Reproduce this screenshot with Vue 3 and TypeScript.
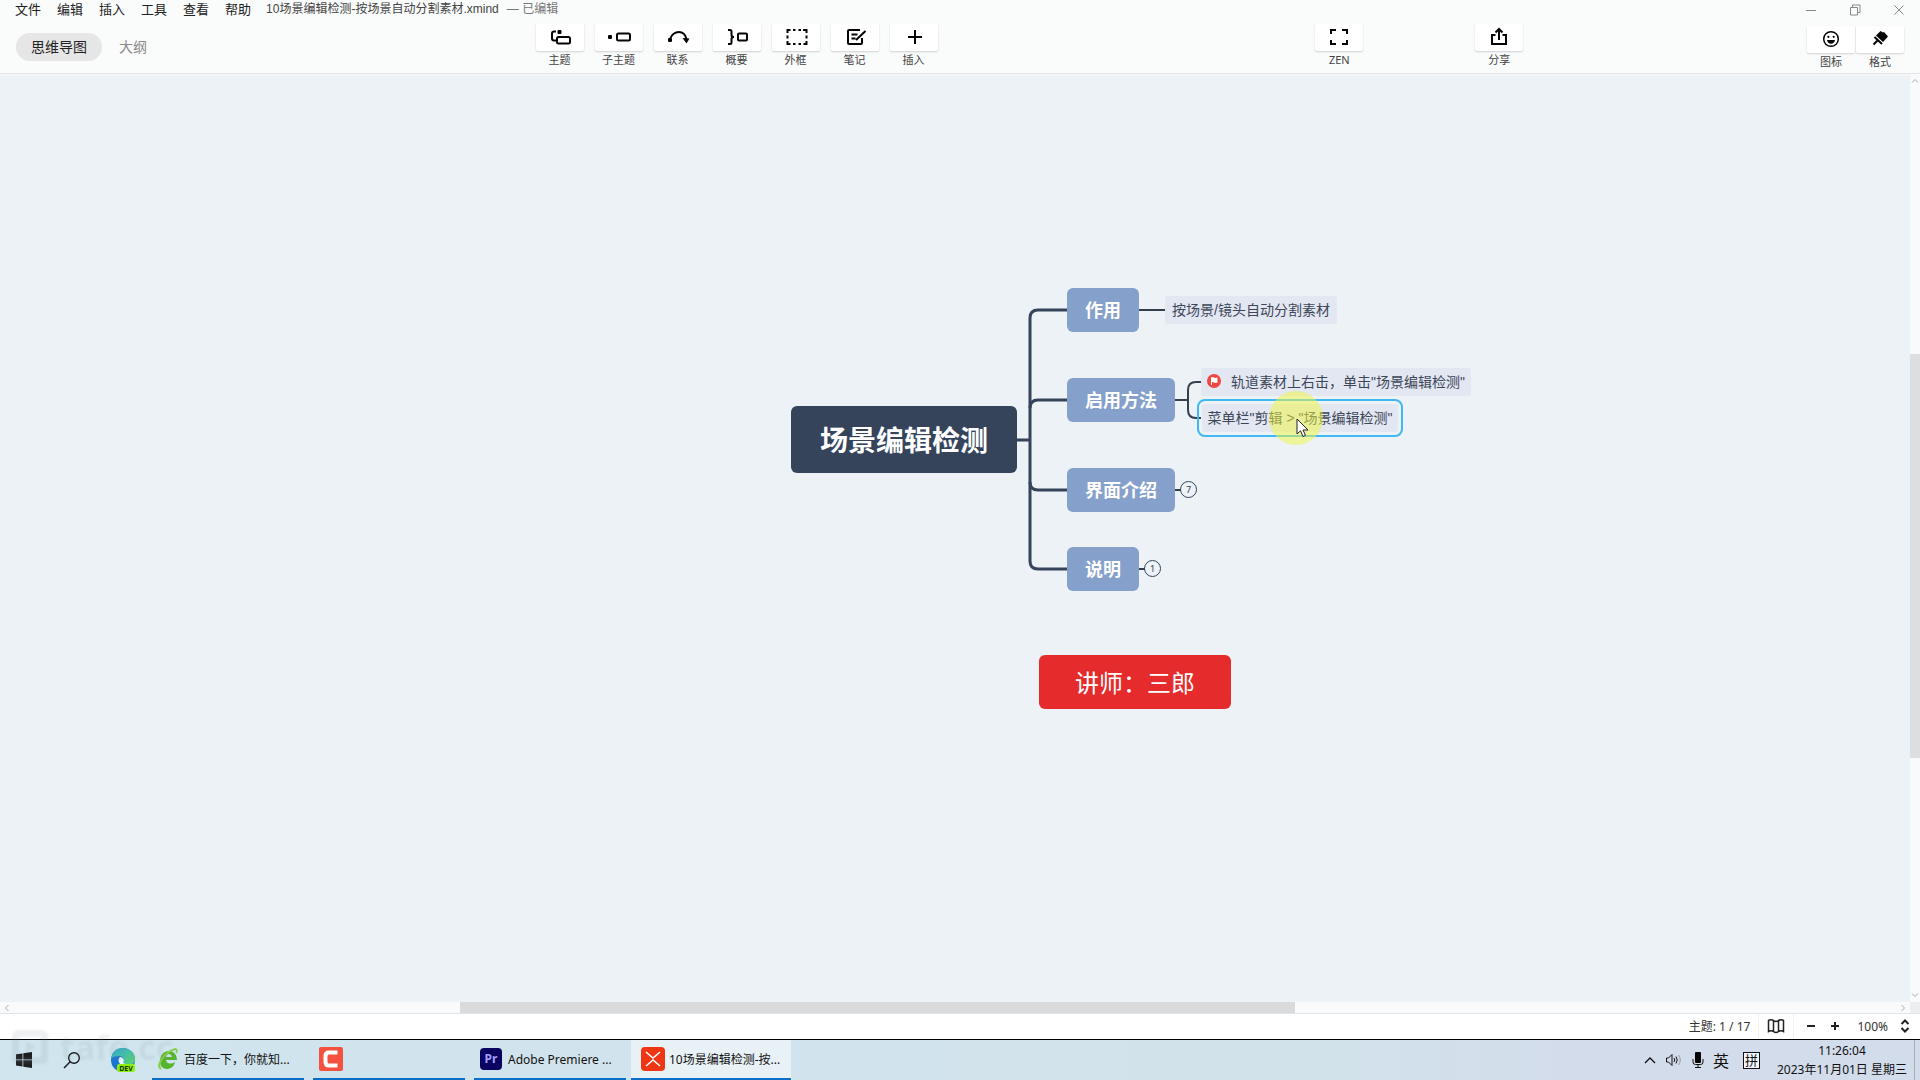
<script setup lang="ts">
import { ref } from 'vue'

interface Tool { id: string; label: string }
interface Topic { text: string; x: number; y: number; w: number; h: number; kind: string }

const menus: string[] = ['文件', '编辑', '插入', '工具', '查看', '帮助']
const activeTab = ref('map')

const tools: Tool[] = [
  { id: 'topic', label: '主题' },
  { id: 'subtopic', label: '子主题' },
  { id: 'relation', label: '联系' },
  { id: 'summary', label: '概要' },
  { id: 'boundary', label: '外框' },
  { id: 'note', label: '笔记' },
  { id: 'insert', label: '插入' },
]

const topics: Topic[] = [
  { text: '场景编辑检测', x: 0, y: 118, w: 226, h: 67, kind: 'root' },
  { text: '作用', x: 276, y: 0, w: 72, h: 44, kind: 'branch' },
  { text: '启用方法', x: 276, y: 90, w: 108, h: 44, kind: 'branch' },
  { text: '界面介绍', x: 276, y: 180, w: 108, h: 44, kind: 'branch' },
  { text: '说明', x: 276, y: 259, w: 72, h: 44, kind: 'branch' },
  { text: '讲师：三郎', x: 248, y: 367, w: 192, h: 54, kind: 'floating' },
  { text: '按场景/镜头自动分割素材', x: 374, y: 8, w: 172, h: 28, kind: 'leaf' },
  { text: '轨道素材上右击，单击"场景编辑检测"', x: 410, y: 80, w: 270, h: 28, kind: 'leaf flagged' },
  { text: '菜单栏"剪辑 > "场景编辑检测"', x: 411, y: 116, w: 196, h: 28, kind: 'leaf selected' },
]

const place = (t: Topic) => ({
  left: `${t.x}px`,
  top: `${t.y}px`,
  width: `${t.w}px`,
  height: `${t.h}px`,
})
</script>

<template>
  <div class="app">
    <header class="header">
      <div class="titlebar">
        <nav class="menus">
          <button v-for="m in menus" :key="m" type="button">{{ m }}</button>
        </nav>
        <span class="file">10场景编辑检测-按场景自动分割素材.xmind</span>
        <span class="edited">— 已编辑</span>
        <div class="window-buttons">
          <button type="button" aria-label="最小化">
            <svg width="12" height="12" viewBox="0 0 12 12"><path d="M1 6.5h10" /></svg>
          </button>
          <button type="button" aria-label="还原">
            <svg width="12" height="12" viewBox="0 0 12 12"><path d="M1.5 3.500h7v7.500h-7zM3.500 3.500v-2.500h7.500v7.500h-2.500" /></svg>
          </button>
          <button type="button" aria-label="关闭">
            <svg width="12" height="12" viewBox="0 0 12 12"><path d="M1.500 1.500l9 9M10.500 1.500l-9 9" /></svg>
          </button>
        </div>
      </div>

      <div class="toolbar">
        <div class="tabs">
          <button type="button" :class="{ active: activeTab === 'map' }" @click="activeTab = 'map'">思维导图</button>
          <button type="button" :class="{ active: activeTab === 'outline' }" @click="activeTab = 'outline'">大纲</button>
        </div>

        <div class="tools">
          <button v-for="t in tools" :key="t.id" type="button" class="tool">
            <span class="tool-box">
              <svg class="icon" width="24" height="20" viewBox="0 0 24 20">
                <template v-if="t.id === 'topic'">
                  <path d="M8 4.500H6Q4 4.500 4 6.500v5q0 2 2 2h2" />
                  <rect x="9" y="10" width="13" height="6.500" rx="1.500" />
                  <rect class="solid" x="9.500" y="3" width="4" height="4" rx="1" />
                </template>
                <template v-else-if="t.id === 'subtopic'">
                  <rect x="10" y="6.500" width="13" height="7" rx="1.500" />
                  <rect class="solid" x="1" y="8" width="4" height="4" rx="1" />
                </template>
                <template v-else-if="t.id === 'relation'">
                  <path d="M4 12C6 7 9.500 5 13 5c4 0 6.500 3 7.500 7" />
                  <rect class="solid" x="2" y="11" width="4" height="4" rx="1" />
                  <path class="solid" d="M16.500 11l7 .5-3 5z" />
                </template>
                <template v-else-if="t.id === 'summary'">
                  <path d="M3 3h2q1.500 0 1.500 1.500V8q0 2 2.500 2-2.500 0-2.500 2v3.500Q6.500 17 5 17H3" />
                  <rect x="13" y="6.500" width="9" height="7" rx="1" />
                </template>
                <template v-else-if="t.id === 'boundary'">
                  <path d="M3.500 6V3h3M9 3h2.500M14.500 3H17M19 3h3.500v3M22.500 8.500v3M22.500 14v3h-3M17 17h-2.500M11.500 17H9M6.500 17h-3v-3M3.500 11.500v-3" />
                </template>
                <template v-else-if="t.id === 'note'">
                  <path d="M17 3H6Q5 3 5 4v12q0 1 1 1h12q1 0 1-1v-5M8.500 7.500h6M8.500 11.500h4M13 13l9.500-9" />
                </template>
                <path v-else d="M6 10h14M13 3v14" />
              </svg>
            </span>
            <span>{{ t.label }}</span>
          </button>
        </div>

        <button type="button" class="tool zen">
          <span class="tool-box">
            <svg class="icon" width="24" height="20" viewBox="0 0 24 20"><path d="M4 7V3h5M15 3h5v4M20 13v4h-5M9 17H4v-4" /></svg>
          </span>
          <span>ZEN</span>
        </button>

        <button type="button" class="tool share">
          <span class="tool-box">
            <svg class="icon" width="24" height="20" viewBox="0 0 24 20"><path d="M8.500 8H5v9h14V8h-3.500M12 13V2.500M8.500 5.500L12 2l3.500 3.500" /></svg>
          </span>
          <span>分享</span>
        </button>

        <div class="side-tools">
          <button type="button" class="tool">
            <span class="tool-box">
              <svg class="icon" width="24" height="20" viewBox="0 0 24 20">
                <circle class="thin" cx="12" cy="10" r="7.300" />
                <path class="solid" d="M8 11h8q-.7 3.800-4 3.800T8 11z" />
                <circle class="solid" cx="9.300" cy="7.800" r="1.100" />
                <circle class="solid" cx="14.700" cy="7.800" r="1.100" />
              </svg>
            </span>
            <span>图标</span>
          </button>
          <button type="button" class="tool">
            <span class="tool-box">
              <svg class="icon" width="24" height="20" viewBox="0 0 24 20">
                <path class="solid" d="M12.500 2l2.500 1.500L16 3l4 4.500-5 5.500-7-6.500z" />
                <path d="M6.500 8l7.500 7M9.500 11.500L5.500 15.500" />
              </svg>
            </span>
            <span>格式</span>
          </button>
        </div>
      </div>
    </header>

    <main class="workspace">
      <section class="canvas">
        <div class="map">
          <svg class="links" width="420" height="310" viewBox="0 0 420 310">
            <g class="trunk">
              <path d="M226 152h13" />
              <path d="M276 22h-29q-8 0-8 8v243q0 8 8 8h29" />
              <path d="M276 112h-29q-8 0-8 8M276 202h-29q-8 0-8-8" />
            </g>
            <g class="twig">
              <path d="M348 22h26M384 112h13M410 94h-5q-8 0-8 8v20q0 8 8 8h5M384 202h6M348 281h6" />
            </g>
          </svg>
          <div v-for="t in topics" :key="t.text" class="topic" :class="t.kind" :style="place(t)">
            <svg v-if="t.kind.includes('flagged')" width="14" height="14" viewBox="0 0 14 14">
              <circle cx="7" cy="7" r="7" fill="#ee4744" />
              <path d="M4 11V3.500q1.500-.8 3 0t3.500 0V8.500q-2 .8-3.500 0t-2 0V11z" fill="#fff" />
            </svg>
            <span>{{ t.text }}</span>
          </div>
          <button type="button" class="fold fold-seven">7</button>
          <button type="button" class="fold fold-one">1</button>
          <div class="halo"></div>
          <svg class="cursor" width="14" height="20" viewBox="0 0 14 20">
            <path d="M1 1v15l3.500-3.200 2.500 5.700 2.500-1.200L7 12h5z" fill="#fff" stroke="#222" />
          </svg>
        </div>
      </section>
      <div class="vscroll">
        <svg width="8" height="8" viewBox="0 0 8 8"><path d="M1 5.500l3-3 3 3" /></svg>
        <div class="vtrack"><div class="vthumb"></div></div>
        <svg width="8" height="8" viewBox="0 0 8 8"><path d="M1 2.500l3 3 3-3" /></svg>
      </div>
      <div class="hscroll">
        <svg width="8" height="8" viewBox="0 0 8 8"><path d="M5.500 1l-3 3 3 3" /></svg>
        <div class="htrack"><div class="hthumb"></div></div>
        <svg width="8" height="8" viewBox="0 0 8 8"><path d="M2.500 1l3 3-3 3" /></svg>
      </div>
      <div class="corner"></div>
    </main>

    <footer class="status">
      <span class="count">主题: 1 / 17</span>
      <button type="button" class="overview" aria-label="导航图">
        <svg width="18" height="16" viewBox="0 0 18 16"><path d="M1.500 2.500q2.500-1.500 5 0v11q-2.500-1.500-5 0zM6.500 2.500q2.500 2 5 0v11q-2.500 2-5 0M11.500 2.500q2.500-1.500 5 0v11q-2.500-1.500-5 0" /></svg>
      </button>
      <button type="button" class="step" aria-label="缩小"><svg width="10" height="10" viewBox="0 0 10 10"><path d="M1 5h8" /></svg></button>
      <button type="button" class="step" aria-label="放大"><svg width="10" height="10" viewBox="0 0 10 10"><path d="M1 5h8M5 1v8" /></svg></button>
      <span class="zoom">100%</span>
      <button type="button" class="spin" aria-label="缩放比例"><svg width="10" height="14" viewBox="0 0 10 14"><path d="M1.500 5L5 1.500 8.500 5M1.500 9L5 12.500 8.500 9" /></svg></button>
    </footer>

    <div class="taskbar">
      <button type="button" class="launch" aria-label="开始">
        <svg width="16" height="16" viewBox="0 0 16 16"><path d="M0 2.300l6.500-.9v6.100H0zM7.300 1.300L16 0v7.500H7.300zM0 8.300h6.500v6.200L0 13.600zM7.300 8.300H16V16l-8.700-1.300z" fill="#1b1d20" /></svg>
      </button>
      <button type="button" class="launch" aria-label="搜索">
        <svg width="18" height="18" viewBox="0 0 18 18"><circle cx="11" cy="7" r="5.300" fill="none" stroke="#17191c" stroke-width="1.400" /><path d="M7.200 10.800L1 17" stroke="#17191c" stroke-width="1.400" /></svg>
      </button>
      <button type="button" class="launch edge" aria-label="Edge">
        <svg width="26" height="26" viewBox="0 0 26 26">
          <defs>
            <linearGradient id="edge-top" x1="0" y1="0" x2="1" y2="1"><stop offset="0" stop-color="#2aa9df" /><stop offset="1" stop-color="#5fd764" /></linearGradient>
          </defs>
          <circle cx="13" cy="13" r="12" fill="#1976d0" />
          <path d="M1 12C2 4 7 1 13 1c7 0 12 5 12 11 0 4-3 6-7 6-3 0-5-1-4-3 1-4-2-6-5-6-4 0-7 1-8 3z" fill="url(#edge-top)" />
          <path d="M10 10c-3 3-1 8 4 9l1-2c-2-1-2-2-1-3 0-3-2-4-4-4z" fill="#e5f5fb" />
          <rect x="7" y="17" width="18" height="8" rx="2" fill="#8df010" />
          <text x="16" y="24" text-anchor="middle" font-size="7" font-weight="700" fill="#163000">DEV</text>
        </svg>
      </button>

      <button type="button" class="task">
        <svg width="20" height="24" viewBox="0 0 20 24">
          <path d="M2 15C2 7 7 4 11 4c5 0 8 4 8 9H8c0 3 4 5 9 2-1 5-5 7-8 7-4 0-7-3-7-7zM8 10h6c-1-4-5-4-6 0z" fill="#55b52d" />
          <path d="M3 22C-3 19 7 4 18 2" fill="none" stroke="#84cf42" stroke-width="2" />
          <path d="M18 2q2 1 0 4" fill="none" stroke="#84cf42" stroke-width="1.500" />
        </svg>
        <span>百度一下，你就知...</span>
      </button>
      <button type="button" class="task" aria-label="Camtasia">
        <svg width="24" height="24" viewBox="0 0 24 24"><rect width="24" height="24" rx="2" fill="#f4513f" /><path d="M18.500 5.500H10Q6.500 5.500 6.500 9v6q0 3.500 3.500 3.500h8.500" fill="none" stroke="#fff" stroke-width="4" /></svg>
      </button>
      <button type="button" class="task">
        <svg width="22" height="22" viewBox="0 0 22 22"><rect width="22" height="22" rx="4" fill="#0a0460" /><text x="11" y="15" text-anchor="middle" font-size="12" font-weight="700" fill="#a59cff">Pr</text></svg>
        <span>Adobe Premiere ...</span>
      </button>
      <button type="button" class="task current">
        <svg width="24" height="24" viewBox="0 0 24 24"><rect width="24" height="24" rx="4" fill="#ee3514" /><path d="M5 5l7 6 7-6M5 19l7-6 7 6" fill="none" stroke="#fff" stroke-width="1.600" /></svg>
        <span>10场景编辑检测-按...</span>
      </button>

      <div class="tray">
        <svg width="12" height="8" viewBox="0 0 12 8"><path d="M1 7l5-5 5 5" fill="none" stroke="#111" stroke-width="1.300" /></svg>
        <svg class="speaker" width="18" height="14" viewBox="0 0 18 14" fill="none" stroke="#111"><path d="M1.500 5h2L7 1.500v11L3.500 9h-2z" /><path d="M9 5q1.500 2 0 4M11 3.500q2.500 3.500 0 7" /><path d="M13.500 2q3.500 5 0 10" stroke="#999" /></svg>
        <svg class="mic" width="12" height="16" viewBox="0 0 12 16"><rect x="3" y="0" width="6" height="11" rx="1" fill="#050505" /><path d="M1 7v3q0 2.500 2.500 2.500h5Q11 12.500 11 10V7M6 12v3M3 15.500h6" fill="none" stroke="#111" /></svg>
        <span class="lang">英</span>
        <span class="ime">拼</span>
      </div>
      <div class="clock">
        <span>11:26:04</span>
        <span>2023年11月01日 星期三</span>
      </div>
      <div class="peek"></div>

      <div class="watermark" aria-hidden="true">
        <svg width="36" height="34" viewBox="0 0 36 34"><path fill-rule="evenodd" d="M6 0h24q6 0 6 6v22q0 6-6 6H6q-6 0-6-6V6q0-6 6-6zm1 7v20h22V7zm7 4l10 6-10 6z" /></svg>
        <span>tafe.cc</span>
      </div>
    </div>
  </div>
</template>

<style>
body {
  margin: 0;
}
</style>

<style scoped>
.app {
  display: flex;
  flex-direction: column;
  min-height: 100vh;
  overflow: hidden;
  background: #fff;
  color: #222;
  font-family: "Noto Sans", "Noto Sans CJK SC", sans-serif;
  font-size: 12px;
}
.app * {
  box-sizing: border-box;
}
button {
  padding: 0;
  border: 0;
  background: none;
  color: inherit;
  font: inherit;
  white-space: nowrap;
}
svg {
  flex: none;
  display: block;
}
.header {
  background: #fafbfb;
  border-bottom: 1px solid #e3e6e8;
}
.titlebar {
  display: flex;
  align-items: center;
  height: 20px;
  padding: 0 15px;
  font-family: "Liberation Sans", "Noto Sans CJK SC", sans-serif;
  line-height: 18px;
}
.menus {
  display: flex;
  gap: 16px;
  padding-right: 13px;
  font-size: 13px;
  line-height: 20px;
}
.file {
  padding: 0 0 2px 2px;
  color: #444;
}
.edited {
  margin-left: 8px;
  padding-bottom: 2px;
  color: #777;
}
.window-buttons {
  display: flex;
  gap: 32px;
  margin-left: auto;
}
.window-buttons path {
  fill: none;
  stroke: #888;
}
.toolbar {
  display: grid;
  grid-template-columns: 536fr auto 378fr auto 112fr auto 284fr auto 16fr;
  height: 53px;
  padding-top: 4px;
}
.tabs {
  display: flex;
  align-items: flex-start;
  gap: 2px;
  padding: 9px 0 0 16px;
}
.tabs button {
  height: 28px;
  padding: 0 15px 2px;
  border-radius: 14px;
  color: #8a8a8a;
  font-size: 14px;
}
.tabs .active {
  background: #e6e6e6;
  color: #222;
}
.tools {
  grid-column: 2;
  display: flex;
  gap: 11px;
}
.tool {
  display: flex;
  flex-direction: column;
  align-items: center;
  width: 48px;
  height: 46px;
  font-size: 11px;
  line-height: 16px;
  gap: 1px;
  color: #444;
}
.tool-box {
  display: flex;
  align-items: center;
  justify-content: center;
  width: 100%;
  height: 27px;
  padding-bottom: 1px;
  border-radius: 0 0 2px 2px;
  background: #fff;
  box-shadow: 0 1px 2px #cfd1d3;
}
.icon {
  fill: none;
  stroke: #050505;
  stroke-width: 2;
}
.icon .thin {
  stroke-width: 1.5;
}
.icon .solid {
  fill: #050505;
  stroke: none;
}
.zen {
  grid-column: 4;
}
.share {
  grid-column: 6;
}
.side-tools {
  grid-column: 8;
  display: flex;
  gap: 1px;
  padding-top: 2px;
}
.workspace {
  flex: 1;
  display: grid;
  grid-template: 1fr 11px / 1fr 10px;
  border-bottom: 1px solid #e2e4e5;
}
.canvas {
  background: #ecf2f6;
  border-top: 2px solid #f3f5f7;
  overflow: hidden;
}
.map {
  position: relative;
  width: 700px;
  height: 430px;
  margin: 212px 0 0 791px;
}
.links {
  position: absolute;
  left: 0;
  top: 0;
  fill: none;
}
.trunk {
  stroke: #35445b;
  stroke-width: 3;
}
.twig {
  stroke: #35404f;
  stroke-width: 2;
}
.topic {
  position: absolute;
  display: flex;
  align-items: center;
  justify-content: center;
  padding-bottom: 2px;
  white-space: nowrap;
}
.root {
  border-radius: 6px;
  background: #35445b;
  color: #fff;
  font-size: 28px;
  font-weight: 700;
}
.branch {
  border-radius: 6px;
  background: #85a0ca;
  color: #fff;
  font-size: 18px;
  font-weight: 700;
}
.floating {
  border-radius: 6px;
  background: #e62b2d;
  color: #fff;
  font-size: 24px;
}
.leaf {
  border-radius: 3px;
  background: #e2e7f2;
  color: #3c4657;
  font-family: "Liberation Sans", "Noto Sans CJK SC", sans-serif;
  font-size: 14px;
}
.flagged {
  gap: 10px;
}
.selected {
  outline: 2px solid #40b8f3;
  outline-offset: 3px;
}
.fold {
  position: absolute;
  width: 17px;
  height: 17px;
  border: 1px solid #35445b;
  border-radius: 50%;
  color: #35445b;
  font-size: 9px;
  line-height: 15px;
}
.fold-seven {
  left: 389px;
  top: 193px;
}
.fold-one {
  left: 353px;
  top: 272px;
}
.halo {
  position: absolute;
  left: 478px;
  top: 103px;
  width: 54px;
  height: 54px;
  border-radius: 50%;
  background: #f0f53c;
  opacity: 0.5;
}
.cursor {
  position: absolute;
  left: 505px;
  top: 130px;
}
.vscroll,
.hscroll {
  display: flex;
  align-items: center;
  background: #f8fafb;
}
.vscroll {
  flex-direction: column;
  padding: 3px 0;
}
.hscroll {
  padding: 0 3px;
}
.vscroll path,
.hscroll path {
  fill: none;
  stroke: #a8abae;
}
.vtrack,
.htrack {
  flex: 1;
  display: flex;
  align-self: stretch;
}
.vtrack {
  flex-direction: column;
  padding-top: 269px;
}
.vthumb {
  height: 404px;
  background: #dcdee0;
}
.htrack {
  padding-left: calc(24% - 8px);
}
.hthumb {
  width: 58%;
  background: #d8dadc;
}
.corner {
  background: #eceeef;
}
.status {
  display: flex;
  align-items: center;
  justify-content: flex-end;
  height: 25px;
  padding: 0 10px 1px 0;
  color: #333;
}
.count {
  padding-right: 8px;
}
.status path {
  fill: none;
  stroke: #222;
  stroke-width: 2;
}
.overview {
  padding: 4px 8px;
  border: solid #eee;
  border-width: 0 1px;
}
.overview path {
  stroke-width: 1.5;
}
.step {
  padding: 0 2px;
  margin-left: 10px;
}
.zoom {
  margin: 0 12px 0 15px;
}
.taskbar {
  position: relative;
  display: flex;
  height: 41px;
  border-top: 1px solid #000;
  background: linear-gradient(90deg, #d0e5ee 0%, #d2e2eb 70%, #d3dceb 82%, #d3dceb 100%);
  color: #111;
}
.launch {
  display: flex;
  align-items: center;
  justify-content: center;
  width: 48px;
}
.edge {
  width: 56px;
  padding-right: 2px;
}
.task {
  display: flex;
  align-items: center;
  gap: 6px;
  width: 152px;
  margin-right: 9px;
  padding: 0 6px;
  border-bottom: 2px solid #0a6fc9;
}
.task.current {
  width: 160px;
  gap: 4px;
  margin-left: -4px;
  padding: 0 10px;
  background: #e8f1f6;
}
.tray {
  display: flex;
  align-items: center;
  gap: 9px;
  margin-left: auto;
}
.lang {
  font-size: 16px;
}
.ime {
  width: 17px;
  height: 17px;
  margin: 0 17px 0 5px;
  border: 1px solid #111;
  background: #f4f6fa;
  font-size: 13px;
  line-height: 15px;
  text-align: center;
}
.clock {
  display: flex;
  flex-direction: column;
  align-items: center;
  justify-content: center;
  line-height: 19px;
  white-space: nowrap;
}
.peek {
  width: 6px;
  margin-left: 7px;
  border-left: 1px solid #a5adb9;
}
.watermark {
  position: absolute;
  left: 12px;
  top: -10px;
  display: flex;
  align-items: center;
  gap: 12px;
  height: 34px;
  color: #7f8a90;
  fill: #7f8a90;
  font-size: 34px;
  font-weight: 700;
  opacity: 0.12;
  filter: blur(1px);
  pointer-events: none;
}
</style>
